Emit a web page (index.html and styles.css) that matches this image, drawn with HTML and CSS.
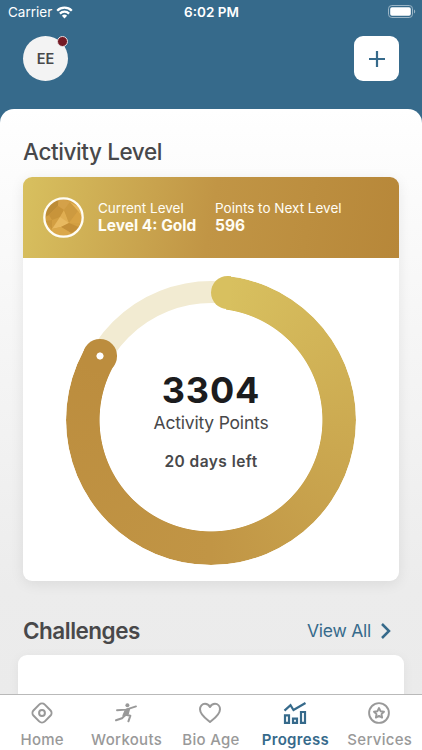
FILE: index.html
```html
<!DOCTYPE html>
<html lang="en">
<head>
    <meta charset="UTF-8">
    <meta name="viewport" content="width=device-width, initial-scale=1.0">
    <title>Progress</title>
    <link rel="stylesheet" href="styles.css">
</head>
<body>
    <div class="app">
        <div class="status-bar">
            <div class="carrier">
                <span>Carrier</span>
                <svg width="17" height="13" viewBox="0 0 17 13" fill="none" stroke="#fff" stroke-width="2.3">
                    <path d="M1.2 4.7a10.4 10.4 0 0 1 14.6 0"/>
                    <path d="M3.9 7.6a6.5 6.5 0 0 1 9.2 0"/>
                    <path d="M8.5 12.4l2.6-2.7a3.8 3.8 0 0 0-5.2 0z" fill="#fff" stroke="none"/>
                </svg>
            </div>
            <div class="time">6:02 PM</div>
            <svg class="battery" width="28" height="13" viewBox="0 0 28 13">
                <rect x=".5" y=".5" width="24" height="12" rx="3.3" fill="none" stroke="#9bb5c6"/>
                <rect x="2.2" y="2.2" width="20.6" height="8.6" rx="1.8" fill="#fff"/>
                <path d="M26 4.5c1.6.6 1.6 3.4 0 4z" fill="#9bb5c6"/>
            </svg>
        </div>

        <header class="top">
            <div class="avatar">EE<span class="dot"></span></div>
            <div class="add">
                <svg width="16" height="16" viewBox="0 0 16 16" stroke="#366a8b" stroke-width="2.2"><path d="M8 0v16M0 8h16"/></svg>
            </div>
        </header>

        <main class="sheet">
            <h2 class="title">Activity Level</h2>
            <section class="card">
                <div class="level">
                    <svg class="badge" width="41" height="41" viewBox="0 0 41 41">
                        <defs><clipPath id="medal"><circle cx="20.5" cy="20.5" r="18.5"/></clipPath></defs>
                        <g clip-path="url(#medal)">
                            <path fill="#d39f42" d="M0 0h41v41H0z"/>
                            <path fill="#bd8c36" d="M0 0h16l-1 9-9 9-6 3z"/>
                            <path fill="#d4a149" d="M16 0l11 5-6 8-6-4z"/>
                            <path fill="#c8943a" d="M6 18l9-9 6 4-4 7-8 3z"/>
                            <path fill="#e0ae52" d="M21 13l5 13-9-3v-3z"/>
                            <path fill="#cd9a40" d="M27 5l8 9-9 12-5-13z"/>
                            <path fill="#e6b65a" d="M27 5l14 8v10l-6-9z"/>
                            <path fill="#d7a244" d="M35 14l6 12-15 0z"/>
                            <path fill="#e8b960" d="M17 20l9 6-8 4-9 2z"/>
                            <path fill="#c48f38" d="M26 26l12 5-10 5-10-6z"/>
                            <path fill="#dba84a" d="M9 32l9-2 10 6-3 5H8z"/>
                            <path fill="#c9963c" d="M2 24l7-1 0 9z"/>
                        </g>
                        <circle cx="20.5" cy="20.5" r="19.2" fill="none" stroke="#fffdf5" stroke-width="2.3"/>
                    </svg>
                    <div class="stat current">
                        <span>Current Level</span>
                        <strong>Level 4: Gold</strong>
                    </div>
                    <div class="stat next">
                        <span>Points to Next Level</span>
                        <strong>596</strong>
                    </div>
                </div>
                <div class="ring">
                    <div class="track"></div>
                    <div class="progress"></div>
                    <div class="cap start"></div>
                    <div class="cap end"></div>
                    <div class="points">3304</div>
                    <div class="label">Activity Points</div>
                    <div class="days">20 days left</div>
                </div>
            </section>

            <div class="section-head">
                <h2 class="title">Challenges</h2>
                <div class="view-all">
                    <span>View All</span>
                    <svg width="10" height="16" viewBox="0 0 10 16" fill="none" stroke="#366a8b" stroke-width="2.5"><path d="M1 1l7 7-7 7"/></svg>
                </div>
            </div>
            <section class="challenge"></section>
        </main>

        <nav class="tabs">
            <div class="tab">
                <svg width="24" height="24" viewBox="0 0 24 24" fill="none" stroke="currentColor" stroke-width="2">
                    <rect x="4.1" y="4.1" width="15.8" height="15.8" rx="4" transform="rotate(45 12 12)"/>
                    <circle cx="12" cy="12" r="2.9"/>
                </svg>
                <span>Home</span>
            </div>
            <div class="tab">
                <svg width="24" height="24" viewBox="0 0 24 24" fill="none" stroke="currentColor" stroke-linecap="round" stroke-linejoin="round">
                    <circle cx="13.4" cy="4.3" r="2" fill="currentColor" stroke="none"/>
                    <path stroke-width="1.9" d="M3 9.3l9-.7 10-3.2"/>
                    <path fill="currentColor" stroke-width="1.3" d="M11.5 8.7l4-.8-1.3 5-3.7 2.1-1.5-.6z"/>
                    <path stroke-width="2" d="M2 19.3l6-2.1 3.6-3.4 4.800.9-2 5.6"/>
                </svg>
                <span>Workouts</span>
            </div>
            <div class="tab">
                <svg width="24" height="24" viewBox="0 0 24 24" fill="none" stroke="currentColor" stroke-width="2" stroke-linejoin="round">
                    <path d="M12 21C9 18.5 2 14 2 8.3 2 5 4.2 2.8 7 2.8c2.3 0 4 1.3 5 3.2 1-1.9 2.7-3.2 5-3.2 2.8 0 5 2.2 5 5.5C22 14 15 18.5 12 21z"/>
                </svg>
                <span>Bio Age</span>
            </div>
            <div class="tab active">
                <svg width="24" height="24" viewBox="0 0 24 24" fill="none" stroke="currentColor" stroke-width="2.2">
                    <path d="M1.5 9.6L7.5 4.2l3 4.8L22.5 2"/>
                    <path d="M2 14.3h4v7.6H2zM10 17.6h4v4.3h-4zM18 11h4v10.9h-4z"/>
                </svg>
                <span>Progress</span>
            </div>
            <div class="tab">
                <svg width="24" height="24" viewBox="0 0 24 24" fill="none" stroke="currentColor" stroke-width="1.9">
                    <circle cx="12" cy="12" r="9.9"/>
                    <path stroke-linejoin="round" d="M12 7l1.5 3.2 3.5.5-2.5 2.4.6 3.5L12 14.9l-3.1 1.7.6-3.5L7 10.700l3.5-.5z"/>
                </svg>
                <span>Services</span>
            </div>
        </nav>
    </div>
</body>
</html>
```
FILE: styles.css
```css
* {
    box-sizing: border-box;
}
body {
    margin: 0;
    font-family: Inter, "Liberation Sans", sans-serif;
    color: #48484a;
}
.app {
    display: flex;
    flex-direction: column;
    height: 750px;
    width: 422px;
    overflow: hidden;
    background: #366a8b;
}

/* status bar */
.status-bar {
    display: grid;
    grid-template-columns: 1fr auto 1fr;
    align-items: center;
    height: 24px;
    padding: 0 6px 0 8px;
    color: #fff;
    font-size: 13.5px;
    flex-shrink: 0;
}
.carrier {
    display: flex;
    align-items: center;
    gap: 4px;
}
.time {
    margin-right: 1px;
    font-weight: 600;
}
.battery {
    justify-self: end;
    margin-top: -2px;
}

.top {
    display: flex;
    justify-content: space-between;
    padding: 12px 23px 0;
    height: 85px;
    flex-shrink: 0;
}
.avatar {
    position: relative;
    width: 45px;
    height: 45px;
    border-radius: 50%;
    background: #f3f3f3;
    font-size: 14.5px;
    font-weight: 600;
    line-height: 45px;
    text-align: center;
}
.dot {
    position: absolute;
    top: 0;
    right: 0;
    width: 11px;
    height: 11px;
    border: 1px solid #e8dcdf;
    border-radius: 50%;
    background: #741a24;
}
.add {
    display: flex;
    align-items: center;
    justify-content: center;
    width: 45px;
    height: 45px;
    border-radius: 9px;
    background: #fff;
}

/* content */
.sheet {
    flex: 1;
    min-height: 0;
    overflow: hidden;
    border-radius: 14px 14px 0 0;
    background: linear-gradient(#fff 0, #fdfdfd 40px, #ececec 480px, #ebebeb 100%);
}
.title {
    margin: 0;
    font-size: 22.5px;
    font-weight: 500;
    line-height: 28px;
    letter-spacing: -0.4px;
}
.sheet > .title {
    padding: 29px 23px 11px;
}
.card {
    height: 404px;
    margin: 0 23px;
    overflow: hidden;
    border-radius: 9px;
    background: #fff;
    box-shadow: 0 3px 14px rgba(0, 0, 0, 0.08);
}
.level {
    display: flex;
    align-items: center;
    height: 81px;
    padding-left: 20px;
    background: linear-gradient(100deg, #d8c05f, #c19545 50%, #b78739);
    color: #fffdf5;
}
.stat {
    display: flex;
    flex-direction: column;
    margin-top: -1px;
    font-size: 13.5px;
    line-height: 18px;
}
.stat strong {
    font-size: 15.5px;
    font-weight: 700;
}
.current {
    width: 117px;
    margin-left: 14px;
}

/* progress ring */
.ring {
    position: relative;
    width: 290px;
    height: 290px;
    margin: 17px auto 0;
    padding-top: 94px;
    text-align: center;
}
.track,
.progress {
    position: absolute;
    inset: 0;
    border-radius: 50%;
}
.track {
    inset: 5.5px;
    border: 22.5px solid #f2ebd2;
}
.progress {
    background: conic-gradient(from 7.5deg, #d8c05f, #ccaa51 24%, #c19545 48%, #bc8d3e 80%, #bc8d3e 292.5deg, transparent 292.5deg);
    -webkit-mask: radial-gradient(circle, transparent 111px, #000 111.8px);
    mask: radial-gradient(circle, transparent 111px, #000 111.8px);
}
.cap {
    position: absolute;
    width: 33.5px;
    height: 33.5px;
    border-radius: 50%;
}
.start {
    left: 145px;
    top: 0.6px;
    background: linear-gradient(90deg, #d8c05f 60%, transparent 60%);
}
.end {
    left: 17px;
    top: 64px;
    background: radial-gradient(circle, #fff 3.2px, #bc8d3e 3.9px);
}
.points {
    color: #1c1c1e;
    font-size: 36px;
    font-weight: 700;
    line-height: 42px;
    letter-spacing: 0.9px;
}
.label {
    margin-top: 1px;
    font-size: 17.5px;
    line-height: 21px;
    letter-spacing: -0.2px;
}
.days {
    margin-top: 19px;
    font-size: 15.5px;
    font-weight: 600;
    line-height: 20px;
    letter-spacing: 0.45px;
}

.section-head {
    display: flex;
    align-items: center;
    justify-content: space-between;
    padding: 36px 31px 10px 23px;
}
.section-head .title {
    font-weight: 600;
    letter-spacing: -0.5px;
}
.view-all {
    display: flex;
    align-items: center;
    gap: 10px;
    color: #366a8b;
    font-size: 17.5px;
    letter-spacing: -0.25px;
}
.view-all span {
    margin-top: -1px;
}
.challenge {
    height: 80px;
    margin: 0 18px;
    border-radius: 9px;
    background: #fff;
    box-shadow: 0 2px 12px rgba(0, 0, 0, 0.05);
}

/* bottom tabs */
.tabs {
    display: grid;
    grid-template-columns: repeat(5, 1fr);
    height: 56px;
    border-top: 1px solid #b9b9b9;
    background: #fff;
    flex-shrink: 0;
}
.tab {
    display: flex;
    flex-direction: column;
    align-items: center;
    padding-top: 6px;
    color: #999;
    font-size: 15px;
    font-weight: 500;
    line-height: 20px;
    letter-spacing: 0.3px;
    white-space: nowrap;
}
.tab svg {
    margin-right: 1px;
}
.tab span {
    margin-top: 5px;
}
.active {
    color: #366a8b;
    font-weight: 600;
}
```
